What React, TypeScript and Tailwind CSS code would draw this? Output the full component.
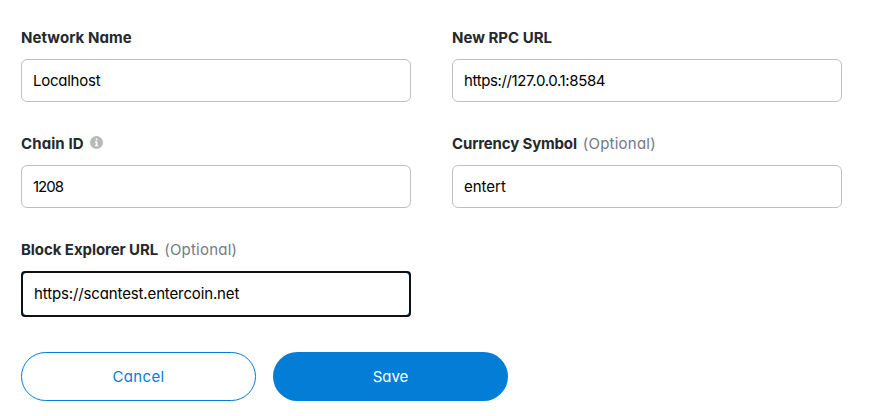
import React from "react";

type FieldProps = {
  label: string;
  value: string;
  labelClass?: string;
  valueClass?: string;
  optional?: boolean;
  info?: boolean;
  focused?: boolean;
};

function InfoIcon() {
  return (
    <svg className="relative -top-px ml-[6px] size-[13px] shrink-0" viewBox="0 0 13 13">
      <circle cx="6.5" cy="6.5" r="6.5" fill="#b8b8b8" />
      <path d="M5.7 2.6h1.7v1.6H5.7zM5 5.3h2.4v3.8h.8v1.1H4.9V9.100h.8V6.400H5z" fill="#fff" />
    </svg>
  );
}

function Field({ label, value, labelClass = "", valueClass = "", optional, info, focused }: FieldProps) {
  const text = <span className={`text-[15px] whitespace-nowrap text-black ${valueClass}`}>{value}</span>;
  return (
    <div className="h-[106px] w-[390px]">
      <div className="flex h-[27px] items-center pb-1 text-[15px] leading-[23px] text-[#24292e]">
        <span className={`font-bold whitespace-nowrap ${labelClass}`}>{label}</span>
        {optional && (
          <span className="ml-[6px] font-normal tracking-[0.22px] text-[#727a84]">(Optional)</span>
        )}
        {info && <InfoIcon />}
      </div>
      {focused ? (
        <div className="mt-[6px] h-[46px] rounded-[4px] border-2 border-[#101010] bg-[#037dd6]">
          <div className="flex h-full items-center rounded-[4px] bg-white px-[11px]">{text}</div>
        </div>
      ) : (
        <div className="mt-[6px] flex h-[43px] items-center rounded-md border border-[#bbc0c5] px-[11px] pt-[2px]">
          {text}
        </div>
      )}
    </div>
  );
}

export default function App() {
  return (
    <main className="h-[416px] w-[874px] overflow-hidden bg-white pt-[26px] pl-[21px] font-['Inter',sans-serif] [font-feature-settings:'cv11']">
      <div className="grid grid-cols-[390px_390px] gap-x-[41px]">
        <Field label="Network Name" value="Localhost" labelClass="tracking-[0.05px]" valueClass="tracking-[-0.25px]" />
        <Field label="New RPC URL" value="https://127.0.0.1:8584" valueClass="tracking-[-0.37px]" />
        <Field label="Chain ID" value="1208" info labelClass="tracking-[0.1px]" valueClass="tracking-[-1px]" />
        <Field label="Currency Symbol" value="entert" optional labelClass="tracking-[-0.15px]" />
        <Field
          label="Block Explorer URL"
          value="https://scantest.entercoin.net"
          optional
          focused
          labelClass="tracking-[-0.07px]"
          valueClass="tracking-[-0.13px]"
        />
      </div>
      <div className="mt-2 flex gap-[17px] text-[15px]">
        <button className="h-[49px] w-[235px] rounded-full border border-[#037dd6] pt-[2px] font-normal tracking-[0.35px] text-[#037dd6]">
          Cancel
        </button>
        <button className="h-[49px] w-[235px] rounded-full bg-[#037dd6] pt-[2px] font-normal text-white">
          Save
        </button>
      </div>
    </main>
  );
}
